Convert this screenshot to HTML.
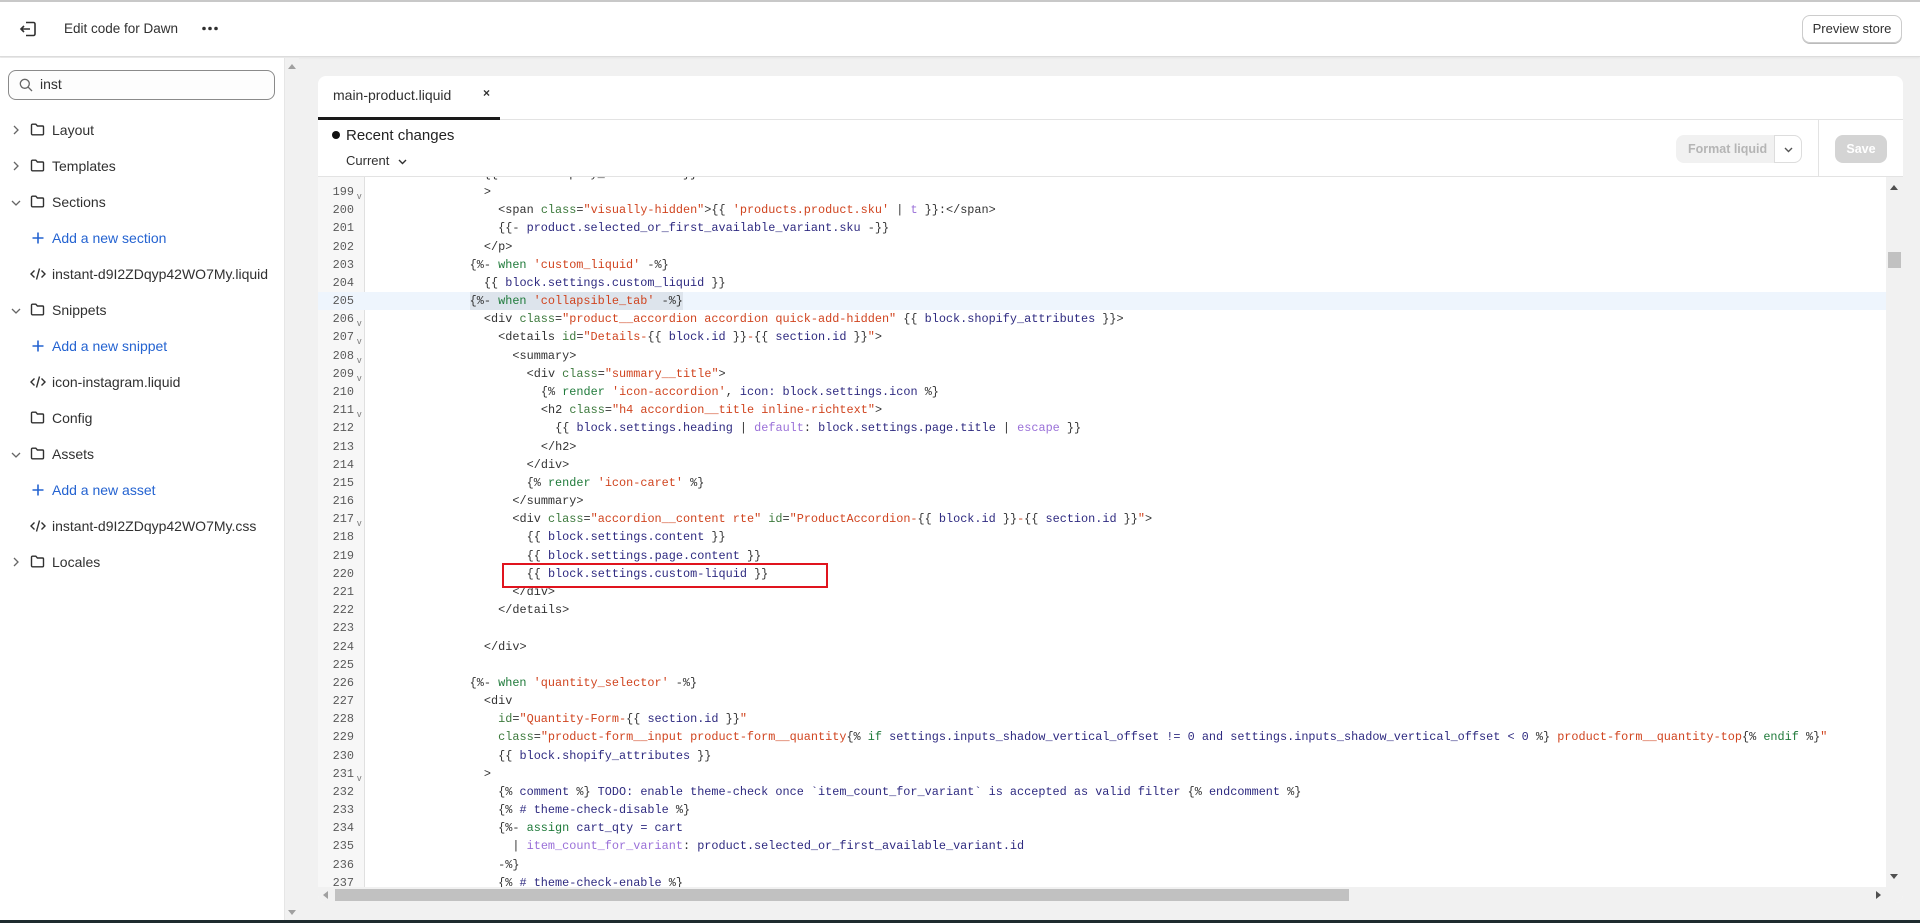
<!DOCTYPE html>
<html><head><meta charset="utf-8"><style>
*{margin:0;padding:0;box-sizing:border-box}
body{width:1920px;height:923px;overflow:hidden;background:#f1f1f1;font-family:"Liberation Sans",sans-serif;color:#303030;position:relative}
.abs{position:absolute}
#hdr{left:0;top:0;width:1920px;height:57px;background:#fff;border-top:2px solid #c8c8c8;border-bottom:1px solid #dcdcdc;box-shadow:0 1px 2px rgba(0,0,0,.06)}
#side{left:0;top:58px;width:284px;height:862px;background:#fff}
.item{position:absolute;left:0;height:20px;font-size:14px;color:#303030;line-height:20px;white-space:nowrap}
.item svg{position:absolute}
.blue{color:#2463d1}
#card{left:318px;top:76px;width:1585px;height:827px;background:#fff;border-radius:8px;overflow:hidden}
.code{font-family:"Liberation Mono",monospace;font-size:11.85px;white-space:pre;line-height:18px}
.ln{position:absolute;left:0;width:351px;text-align:right;color:#5a5a5a}
.cl{position:absolute;left:370px;color:#333}
.a{color:#3d7a3d}.s{color:#d0441f}.k{color:#1f7a3a}.v{color:#2e2a80}.f{color:#9a70d8}
.fold{position:absolute;left:355px;font-size:9px;color:#777;font-family:"Liberation Sans",sans-serif}
</style></head><body>

<div id="hdr" class="abs">
  <svg class="abs" style="left:19px;top:19px" width="18" height="16" viewBox="0 0 18 16" fill="none" stroke="#303030" stroke-width="1.6"><path d="M7 1.5h7.5a1.5 1.5 0 0 1 1.5 1.5v10a1.5 1.5 0 0 1-1.5 1.5H7"/><path d="M11 8H2M5 5 2 8l3 3"/></svg>
  <div class="abs" style="left:64px;top:19px;font-size:13.5px">Edit code for Dawn</div>
  <svg class="abs" style="left:202px;top:24px" width="16" height="5" viewBox="0 0 16 5" fill="#303030"><circle cx="2" cy="2.5" r="1.8"/><circle cx="8" cy="2.5" r="1.8"/><circle cx="14" cy="2.5" r="1.8"/></svg>
  <div class="abs" style="left:1802px;top:13px;width:100px;height:28px;border:1px solid #ccc;border-radius:8px;box-shadow:0 1px 0 #bbb;font-size:13px;text-align:center;line-height:26px;color:#303030">Preview store</div>
</div>

<div id="side" class="abs">
  <div class="abs" style="left:8px;top:12px;width:267px;height:30px;border:1px solid #8a8a8a;border-radius:8px;background:#fdfdfd"></div>
  <svg class="abs" style="left:19px;top:20px" width="14" height="14" viewBox="0 0 14 14" fill="none" stroke="#666" stroke-width="1.3"><circle cx="5.8" cy="5.8" r="4.5"/><path d="M9.2 9.2 13 13"/></svg>
  <div class="abs" style="left:40px;top:18px;font-size:14px">inst</div>
</div>
<div class="abs" style="left:284px;top:58px;width:15px;height:862px;background:#f1f1f1;border-left:1px solid #e6e6e6">
  <div class="abs" style="left:3px;top:6px;width:0;height:0;border-left:4px solid transparent;border-right:4px solid transparent;border-bottom:5px solid #a0a0a0"></div>
  <div class="abs" style="left:3px;top:852px;width:0;height:0;border-left:4px solid transparent;border-right:4px solid transparent;border-top:5px solid #a0a0a0"></div>
</div>

<div id="items"></div>

<div id="card" class="abs">
  <div class="abs" style="left:15px;top:11px;font-size:14px">main-product.liquid</div>
  <div class="abs" style="left:165px;top:10px;font-size:12px;font-weight:bold">×</div>
  <div class="abs" style="left:0;top:43px;width:1585px;height:1px;background:#e3e3e3"></div>
  <div class="abs" style="left:0;top:41px;width:182px;height:3px;background:#1a1a1a"></div>
  <div class="abs" style="left:14px;top:55px;width:8px;height:8px;border-radius:50%;background:#111"></div>
  <div class="abs" style="left:28px;top:51px;font-size:15px;color:#222">Recent changes</div>
  <div class="abs" style="left:28px;top:77px;font-size:13px;color:#303030">Current</div>
  <svg class="abs" style="left:80px;top:83px" width="9" height="6" viewBox="0 0 9 6" fill="none" stroke="#303030" stroke-width="1.4"><path d="M1 1l3.5 3.5L8 1"/></svg>
  <div class="abs" style="left:1358px;top:59px;width:126px;height:28px;background:#f1f1f1;border-radius:8px;font-size:12.5px;font-weight:bold;color:#b5b5b5;line-height:28px;padding-left:12px">Format liquid</div>
  <div class="abs" style="left:1456px;top:59px;width:28px;height:28px;background:#fff;border:1px solid #ddd;border-radius:0 8px 8px 0"></div>
  <svg class="abs" style="left:1466px;top:71px" width="9" height="6" viewBox="0 0 9 6" fill="none" stroke="#555" stroke-width="1.4"><path d="M1 1l3.5 3.5L8 1"/></svg>
  <div class="abs" style="left:1500px;top:44px;width:1px;height:57px;background:#e3e3e3"></div>
  <div class="abs" style="left:1517px;top:59px;width:52px;height:28px;background:#d4d4d4;border-radius:8px;font-size:12.5px;font-weight:bold;color:#fff;line-height:28px;text-align:center">Save</div>
  <div class="abs" style="left:0;top:100px;width:1585px;height:1px;background:#e3e3e3"></div>
</div>

<div class="abs code" id="code" style="left:318px;top:177px;width:1568px;height:710px;overflow:hidden;background:#fff">
  <div class="abs" style="left:0;top:0;width:47px;height:710px;background:#f7f7f7;border-right:1px solid #e0e0e0"></div>
</div>
<div class="abs" style="left:1886px;top:177px;width:17px;height:710px;background:#f1f1f1">
  <div class="abs" style="left:4px;top:8px;width:0;height:0;border-left:4px solid transparent;border-right:4px solid transparent;border-bottom:5px solid #505050"></div>
  <div class="abs" style="left:2px;top:75px;width:13px;height:16px;background:#c1c1c1"></div>
  <div class="abs" style="left:4px;top:697px;width:0;height:0;border-left:4px solid transparent;border-right:4px solid transparent;border-top:5px solid #505050"></div>
</div>
<div class="abs" style="left:318px;top:887px;width:1585px;height:16px;background:#f1f1f1;border-radius:0 0 8px 8px">
  <div class="abs" style="left:5px;top:4px;width:0;height:0;border-top:4px solid transparent;border-bottom:4px solid transparent;border-right:5px solid #a0a0a0"></div>
  <div class="abs" style="left:17px;top:2px;width:1014px;height:12px;background:#c1c1c1"></div>
  <div class="abs" style="left:1558px;top:4px;width:0;height:0;border-top:4px solid transparent;border-bottom:4px solid transparent;border-left:5px solid #505050"></div>
</div>
<div class="abs" style="left:502px;top:563px;width:326px;height:25px;border:2px solid #e0141e"></div>
<div class="abs" style="left:0;top:920px;width:1920px;height:3px;background:#1e2b2f"></div>

<script>
const items=[
["f","Layout",130,1],["f","Templates",166,1],["f","Sections",202,0],["a","Add a new section",238],["c","instant-d9I2ZDqyp42WO7My.liquid",274],
["f","Snippets",310,0],["a","Add a new snippet",346],["c","icon-instagram.liquid",382],["f","Config",418,2],["f","Assets",454,0],
["a","Add a new asset",490],["c","instant-d9I2ZDqyp42WO7My.css",526],["f","Locales",562,1]];
let h='';
for(const it of items){
 const y=it[2]-10;
 let ic='';
 if(it[0]=='f'){
  if(it[3]==1) ic+='<svg style="left:12px;top:5px" width="8" height="10" viewBox="0 0 8 10" fill="none" stroke="#666" stroke-width="1.3"><path d="M2 1l4 4-4 4"/></svg>';
  if(it[3]==0) ic+='<svg style="left:11px;top:7px" width="10" height="8" viewBox="0 0 10 8" fill="none" stroke="#666" stroke-width="1.3"><path d="M1 2l4 4 4-4"/></svg>';
  ic+='<svg style="left:30px;top:3px" width="15" height="13" viewBox="0 0 15 13" fill="none" stroke="#303030" stroke-width="1.4"><path d="M1.5 2.2a1 1 0 0 1 1-1h3.3l1.6 1.8h5.1a1 1 0 0 1 1 1v6.8a1 1 0 0 1-1 1H2.5a1 1 0 0 1-1-1z"/></svg>';
  h+='<div class="item" style="top:'+y+'px">'+ic+'<span style="position:absolute;left:52px">'+it[1]+'</span></div>';
 } else if(it[0]=='a'){
  ic='<svg style="left:32px;top:4px" width="12" height="12" viewBox="0 0 12 12" stroke="#2463d1" stroke-width="1.6"><path d="M6 0.5v11M0.5 6h11"/></svg>';
  h+='<div class="item blue" style="top:'+y+'px">'+ic+'<span style="position:absolute;left:52px">'+it[1]+'</span></div>';
 } else {
  ic='<svg style="left:30px;top:3px" width="16" height="14" viewBox="0 0 16 14" fill="none" stroke="#303030" stroke-width="1.4"><path d="M4.5 3.5 1 7l3.5 3.5M11.5 3.5 15 7l-3.5 3.5M9.5 1.5l-3 11"/></svg>';
  h+='<div class="item" style="top:'+y+'px">'+ic+'<span style="position:absolute;left:52px">'+it[1]+'</span></div>';
 }
}
document.getElementById('items').innerHTML=h;

function e(s){return s.replace(/&/g,'&amp;').replace(/</g,'&lt;').replace(/>/g,'&gt;')}
const T=(t,c)=>c?'<span class="'+c+'">'+e(t)+'</span>':e(t);
const L=[
[198,16,[["{{ block.shopify_attributes }}"]]],
[199,16,[[">"]],1],
[200,18,[["<span "],["class","a"],["="],['"visually-hidden"',"s"],[">{{ "],["'products.product.sku'","s"],[" | "],["t","f"],[" }}:</span>"]]],
[201,18,[["{{- "],["product.selected_or_first_available_variant.sku","v"],[" -}}"]]],
[202,16,[["</p>"]]],
[203,14,[["{%- "],["when","k"],[" "],["'custom_liquid'","s"],[" -%}"]]],
[204,16,[["{{ "],["block.settings.custom_liquid","v"],[" }}"]]],
[205,14,[["{%- "],["when","k"],[" "],["'collapsible_tab'","s"],[" -%}"]]],
[206,16,[["<div "],["class","a"],["="],['"product__accordion accordion quick-add-hidden"',"s"],[" {{ "],["block.shopify_attributes","v"],[" }}>"]],1],
[207,18,[["<details "],["id","a"],["="],['"Details-',"s"],["{{ "],["block.id","v"],[" }}"],["-","s"],["{{ "],["section.id","v"],[" }}"],['"',"s"],[">"]],1],
[208,20,[["<summary>"]],1],
[209,22,[["<div "],["class","a"],["="],['"summary__title"',"s"],[">"]],1],
[210,24,[["{% "],["render","k"],[" "],["'icon-accordion'","s"],[", "],["icon: block.settings.icon","v"],[" %}"]]],
[211,24,[["<h2 "],["class","a"],["="],['"h4 accordion__title inline-richtext"',"s"],[">"]],1],
[212,26,[["{{ "],["block.settings.heading","v"],[" | "],["default","f"],[": "],["block.settings.page.title","v"],[" | "],["escape","f"],[" }}"]]],
[213,24,[["</h2>"]]],
[214,22,[["</div>"]]],
[215,22,[["{% "],["render","k"],[" "],["'icon-caret'","s"],[" %}"]]],
[216,20,[["</summary>"]]],
[217,20,[["<div "],["class","a"],["="],['"accordion__content rte"',"s"],[" "],["id","a"],["="],['"ProductAccordion-',"s"],["{{ "],["block.id","v"],[" }}"],["-","s"],["{{ "],["section.id","v"],[" }}"],['"',"s"],[">"]],1],
[218,22,[["{{ "],["block.settings.content","v"],[" }}"]]],
[219,22,[["{{ "],["block.settings.page.content","v"],[" }}"]]],
[220,22,[["{{ "],["block.settings.custom-liquid","v"],[" }}"]]],
[221,20,[["</div>"]]],
[222,18,[["</details>"]]],
[223,0,[]],
[224,16,[["</div>"]]],
[225,0,[]],
[226,14,[["{%- "],["when","k"],[" "],["'quantity_selector'","s"],[" -%}"]]],
[227,16,[["<div"]]],
[228,18,[["id","a"],["="],['"Quantity-Form-',"s"],["{{ "],["section.id","v"],[" }}"],['"',"s"]]],
[229,18,[["class","a"],["="],['"product-form__input product-form__quantity',"s"],["{% "],["if","k"],[" "],["settings.inputs_shadow_vertical_offset != 0 and settings.inputs_shadow_vertical_offset < 0","v"],[" %}"],[" product-form__quantity-top","s"],["{% "],["endif","k"],[" %}"],['"',"s"]]],
[230,18,[["{{ "],["block.shopify_attributes","v"],[" }}"]]],
[231,16,[[">"]],1],
[232,18,[["{% "],["comment","v"],[" %}"],[" TODO: enable theme-check once `item_count_for_variant` is accepted as valid filter ","v"],["{% "],["endcomment","v"],[" %}"]]],
[233,18,[["{% "],["# theme-check-disable","v"],[" %}"]]],
[234,18,[["{%- "],["assign","k"],[" "],["cart_qty = cart","v"]]],
[235,20,[["| "],["item_count_for_variant","f"],[": "],["product.selected_or_first_available_variant.id","v"]]],
[236,18,[["-%}"]]],
[237,18,[["{% "],["# theme-check-enable","v"],[" %}"]]]
];
let c='';
const cw=7.12;
for(const [n,ind,toks,fold] of L){
 const top=(15+(n-199)*18.18)-9;
 if(n==205){c+='<div class="abs" style="left:0;top:'+top+'px;width:1568px;height:18px;background:#eef5fd"></div>';
  c+='<div class="abs" style="left:'+(52+ind*cw)+'px;top:'+top+'px;width:'+(30*cw)+'px;height:18px;background:#dde4ec"></div>';}
 c+='<div class="ln" style="top:'+top+'px;width:36px;left:0">'+(n==198?'':n)+'</div>';
 if(fold)c+='<div class="fold" style="top:'+(top+4)+'px;left:39px">v</div>';
 let s='';for(const t of toks)s+=T(t[0],t[1]);
 c+='<div class="cl" style="top:'+top+'px;left:'+(52+ind*cw)+'px">'+s+'</div>';
}
document.getElementById('code').insertAdjacentHTML('beforeend',c);
</script>
</body></html>
